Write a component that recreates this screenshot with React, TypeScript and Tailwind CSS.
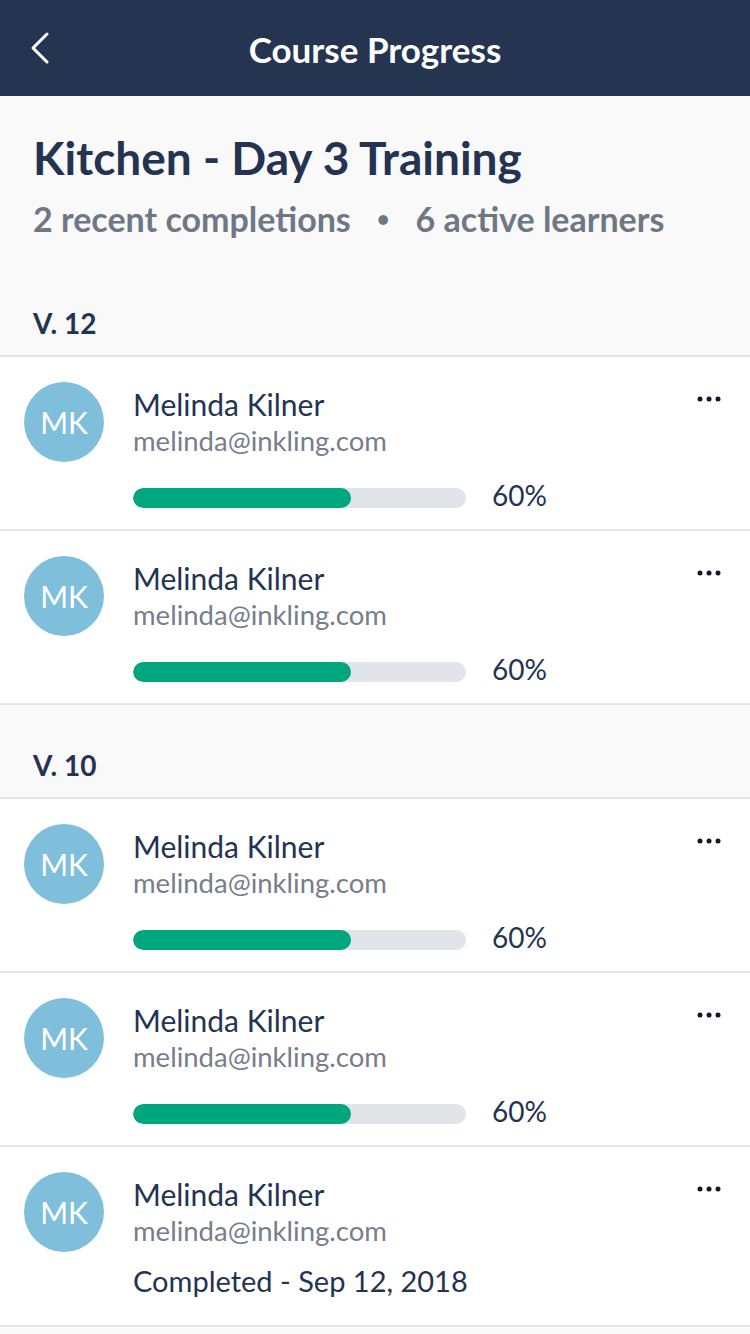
import { ChevronLeft } from 'lucide-react'

type Learner = {
  name: string
  email: string
  progress?: number
  completed?: string
}

const sections: { version: string; learners: Learner[] }[] = [
  {
    version: 'V. 12',
    learners: [
      { name: 'Melinda Kilner', email: 'melinda@inkling.com', progress: 65.5 },
      { name: 'Melinda Kilner', email: 'melinda@inkling.com', progress: 65.5 },
    ],
  },
  {
    version: 'V. 10',
    learners: [
      { name: 'Melinda Kilner', email: 'melinda@inkling.com', progress: 65.5 },
      { name: 'Melinda Kilner', email: 'melinda@inkling.com', progress: 65.5 },
      { name: 'Melinda Kilner', email: 'melinda@inkling.com', completed: 'Completed - Sep 12, 2018' },
    ],
  },
]

function MoreDots() {
  return (
    <svg width="26" height="6" viewBox="0 0 26 6" className="text-[#111827]">
      <circle cx="3" cy="3" r="2.5" fill="currentColor" />
      <circle cx="12" cy="3" r="2.5" fill="currentColor" />
      <circle cx="21" cy="3" r="2.5" fill="currentColor" />
    </svg>
  )
}

function LearnerRow({ learner }: { learner: Learner }) {
  return (
    <div
      className={`flex items-start bg-white border-b-2 border-[#e2e5e9] pl-6 pr-[27px] pt-[25px] ${
        learner.completed ? 'h-[180px]' : 'h-[174px]'
      }`}
    >
      <div className="w-20 h-20 shrink-0 rounded-full bg-[#80bfdb] flex items-center justify-center text-white text-[30px] leading-none">
        MK
      </div>
      <div className="flex-1 ml-[29px] pt-[5px]">
        <div className="text-[30px] leading-[34px] text-[#243352]">{learner.name}</div>
        <div className="mt-[3px] text-[27.5px] leading-[34px] text-[#767e8b]">{learner.email}</div>
        {learner.completed ? (
          <div className="mt-[16px] text-[29px] leading-[34px] text-[#243352]">{learner.completed}</div>
        ) : (
          <div className="mt-[23px] flex items-center">
            <div className="w-[333px] h-5 rounded-full bg-[#e1e4e8] overflow-hidden">
              <div className="h-full rounded-full bg-[#00a67d]" style={{ width: `${learner.progress}%` }} />
            </div>
            <div className="ml-[26px] mb-[6px] text-[28px] leading-[28px] text-[#243352]">60%</div>
          </div>
        )}
      </div>
      <div className="pt-[14px]">
        <MoreDots />
      </div>
    </div>
  )
}

export default function App() {
  return (
    <div className="min-h-screen bg-[#f9f9f9] font-['Lato',sans-serif]">
      <div className="h-24 bg-[#253551] flex items-center px-6 text-white">
        <div className="w-12">
          <ChevronLeft className="w-14 h-14 -ml-3" strokeWidth={1.3} />
        </div>
        <h1 className="flex-1 text-center text-[35px] font-bold leading-none pt-[2px]">Course Progress</h1>
        <div className="w-12" />
      </div>

      <div className="px-[33px] pt-9 pb-[26px]">
        <h2 className="text-[46px] leading-[52px] font-bold text-[#243352]">Kitchen - Day 3 Training</h2>
        <p className="mt-[17px] text-[34px] leading-9 font-bold text-[#6f7785] flex items-center">
          <span>2 recent completions</span>
          <span className="mx-[26px] text-[22px]">•</span>
          <span>6 active learners</span>
        </p>
      </div>

      {sections.map((section) => (
        <div key={section.version}>
          <div className="h-[94px] flex items-end px-[33px] pb-[18px] border-b-2 border-[#e2e5e9]">
            <span className="text-[28px] leading-[28px] font-bold text-[#243352]">{section.version}</span>
          </div>
          {section.learners.map((learner, i) => (
            <LearnerRow key={i} learner={learner} />
          ))}
        </div>
      ))}
    </div>
  )
}
